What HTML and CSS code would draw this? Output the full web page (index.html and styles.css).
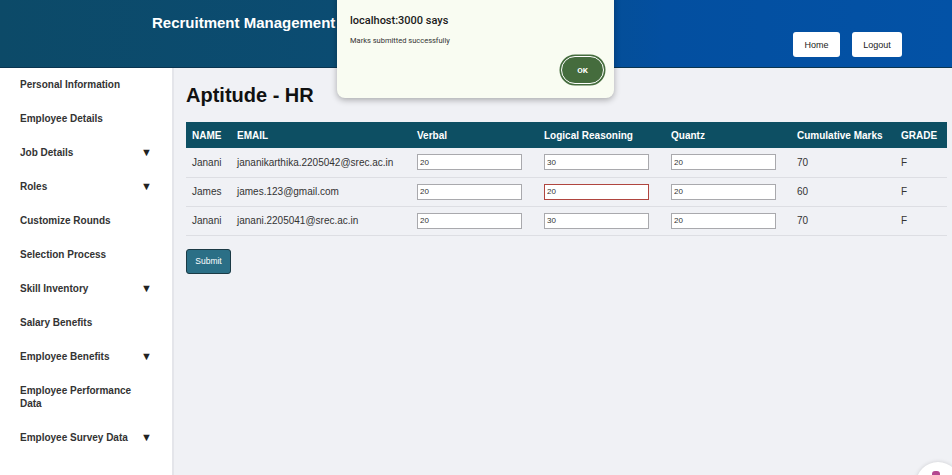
FILE: index.html
```html
<!DOCTYPE html>
<html>
<head>
<meta charset="utf-8">
<link rel="stylesheet" href="styles.css">
</head>
<body>
<div class="page">
  <header class="topbar">
    <div class="brand">Recruitment Management</div>
    <div class="top-actions">
      <button class="top-btn home">Home</button>
      <button class="top-btn logout">Logout</button>
    </div>
  </header>
  <div class="body">
    <nav class="sidebar">
      <div class="nav-item">Personal Information</div>
      <div class="nav-item">Employee Details</div>
      <div class="nav-item"><span>Job Details</span><span class="arrow">▼</span></div>
      <div class="nav-item"><span>Roles</span><span class="arrow">▼</span></div>
      <div class="nav-item">Customize Rounds</div>
      <div class="nav-item">Selection Process</div>
      <div class="nav-item"><span>Skill Inventory</span><span class="arrow">▼</span></div>
      <div class="nav-item">Salary Benefits</div>
      <div class="nav-item"><span>Employee Benefits</span><span class="arrow">▼</span></div>
      <div class="nav-item"><span class="wrap">Employee Performance Data</span></div>
      <div class="nav-item"><span>Employee Survey Data</span><span class="arrow">▼</span></div>
    </nav>
    <main class="main">
      <h1 class="title">Aptitude - HR</h1>
      <table class="marks">
        <colgroup>
          <col class="c-name"><col class="c-email"><col class="c-verbal"><col class="c-logic"><col class="c-quant"><col class="c-cum"><col class="c-grade">
        </colgroup>
        <thead>
          <tr><th>NAME</th><th>EMAIL</th><th>Verbal</th><th>Logical Reasoning</th><th>Quantz</th><th>Cumulative Marks</th><th>GRADE</th></tr>
        </thead>
        <tbody>
          <tr><td>Janani</td><td>jananikarthika.2205042@srec.ac.in</td><td><input class="mark" value="20"></td><td><input class="mark" value="30"></td><td><input class="mark" value="20"></td><td>70</td><td>F</td></tr>
          <tr><td>James</td><td>james.123@gmail.com</td><td><input class="mark" value="20"></td><td><input class="mark focus" value="20"></td><td><input class="mark" value="20"></td><td>60</td><td>F</td></tr>
          <tr><td>Janani</td><td>janani.2205041@srec.ac.in</td><td><input class="mark" value="20"></td><td><input class="mark" value="30"></td><td><input class="mark" value="20"></td><td>70</td><td>F</td></tr>
        </tbody>
      </table>
      <button class="submit">Submit</button>
    </main>
  </div>

  <div class="dialog">
    <div class="dlg-title">localhost:3000 says</div>
    <div class="dlg-msg">Marks submitted successfully</div>
    <div class="dlg-actions"><button class="ok">OK</button></div>
  </div>

  <div class="fab"><span class="fab-dot"></span></div>
</div>
</body>
</html>
```
FILE: styles.css
```css
* { box-sizing: border-box; }
html, body { margin: 0; padding: 0; }
body {
  font-family: "Liberation Sans", Arial, sans-serif;
  background: #f0f1f5;
  width: 952px;
  height: 475px;
  overflow: hidden;
}
.page {
  position: relative;
  width: 952px;
  height: 475px;
  display: flex;
  flex-direction: column;
  overflow: hidden;
}
.topbar {
  height: 68px;
  flex: none;
  background: linear-gradient(90deg, #0c4a68 0%, #0b4c72 35%, #034fa0 70%, #0352a6 100%);
  border-bottom: 1px solid #0a3550;
  display: flex;
  justify-content: space-between;
  padding: 0 50px 0 152px;
}
.brand {
  color: #fff;
  font-family: "Liberation Sans", Arial, sans-serif;
  font-weight: 700;
  font-size: 15px;
  line-height: 16px;
  padding-top: 15px;
  white-space: nowrap;
}
.top-actions {
  display: flex;
  gap: 12px;
  padding-top: 32px;
}
.top-btn {
  height: 25px;
  border: none;
  background: #fff;
  border-radius: 3px;
  font-family: "Liberation Sans", Arial, sans-serif;
  font-size: 9px;
  color: #222;
  padding: 0;
}
.home { width: 47px; }
.logout { width: 50px; }
.body {
  flex: 1;
  display: flex;
  min-height: 0;
  overflow: hidden;
}
.sidebar {
  width: 174px;
  flex: none;
  background: #fff;
  border-right: 2px solid #e4e5ea;
}
.nav-item {
  display: flex;
  justify-content: space-between;
  align-items: flex-start;
  padding: 10px 20px 11px 20px;
  font-size: 10px;
  line-height: 13px;
  font-weight: 700;
  color: #333;
}
.nav-item .wrap { width: 125px; }
.arrow {
  font-size: 11px;
  color: #222;
  line-height: 13px;
}
.main {
  flex: 1;
  padding: 0 5px 0 12px;
}
.title {
  margin: 15px 0 15px 0;
  font-size: 20px;
  line-height: 24px;
  font-weight: 700;
  color: #111;
}
.marks {
  width: 761px;
  border-collapse: collapse;
  table-layout: fixed;
  font-size: 10px;
  color: #333;
}
.c-name { width: 45px; }
.c-email { width: 180px; }
.c-verbal { width: 127px; }
.c-logic { width: 127px; }
.c-quant { width: 126px; }
.c-cum { width: 104px; }
.c-grade { width: 52px; }
.marks thead tr { background: #0d4f63; }
.marks th {
  color: #fff;
  font-weight: 700;
  text-align: left;
  height: 26px;
  padding: 0 6px;
  white-space: nowrap;
}
.marks td {
  height: 29px;
  padding: 0 6px;
  border-bottom: 1px solid #dddee3;
  white-space: nowrap;
  color: #333;
}
.mark {
  width: 105px;
  height: 16px;
  border: 1px solid #a9a9ad;
  background: #fff;
  font-family: "Liberation Sans", Arial, sans-serif;
  font-size: 8px;
  padding: 0 2px;
  color: #333;
  display: block;
}
.mark.focus { border-color: #b0453f; }
.submit {
  margin-top: 13px;
  width: 45px;
  height: 25px;
  background: #2b6f86;
  border: 1.5px solid #1b3a45;
  border-radius: 3px;
  color: #fff;
  font-family: "Liberation Sans", Arial, sans-serif;
  font-size: 8.5px;
  padding: 0;
}
.dialog {
  position: absolute;
  left: 337px;
  top: -10px;
  width: 277px;
  height: 108px;
  background: #f9fcf2;
  border-radius: 8px;
  box-shadow: 0 2px 6px rgba(0,0,0,0.3);
  padding: 24px 13px 0 13px;
  font-family: Roboto, "Liberation Sans", sans-serif;
}
.dlg-title {
  font-size: 11px;
  font-weight: 500;
  color: #1b1b1b;
  line-height: 14px;
}
.dlg-msg {
  margin-top: 8px;
  font-size: 7.5px;
  color: #333;
  line-height: 10px;
}
.dlg-actions {
  display: flex;
  justify-content: flex-end;
  margin-top: 10px;
}
.ok {
  width: 43px;
  height: 28px;
  border-radius: 14px;
  background: #456c3d;
  border: 1.5px solid #fff;
  box-shadow: 0 0 0 1.5px #456c3d;
  color: #fff;
  font-family: Roboto, "Liberation Sans", sans-serif;
  font-weight: 700;
  font-size: 8px;
  padding: 0;
  margin-right: -3px;
}
.fab {
  position: absolute;
  left: 916px;
  top: 462px;
  width: 44px;
  height: 44px;
  border-radius: 50%;
  background: #fff;
  box-shadow: 0 0 4px rgba(0,0,0,0.15);
}
.fab-dot {
  position: absolute;
  left: 16px;
  top: 9px;
  width: 8px;
  height: 5px;
  border-radius: 3px 3px 0 0;
  background: #b4478f;
}
```
